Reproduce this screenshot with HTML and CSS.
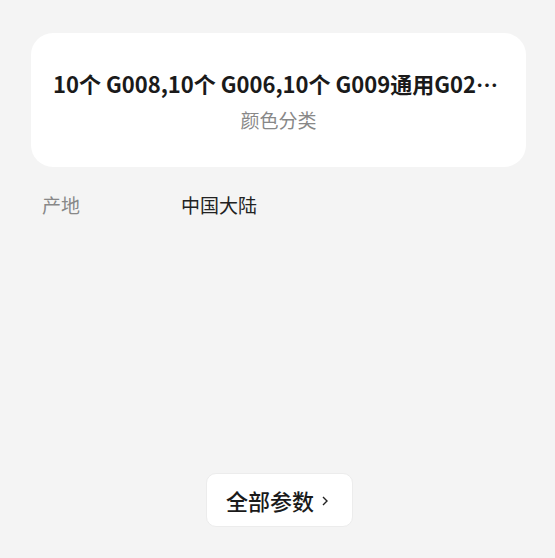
FILE: index.html
```html
<!DOCTYPE html>
<html lang="zh">
<head>
<meta charset="utf-8">
<link rel="stylesheet" href="styles.css">
</head>
<body>
<div class="page">
  <section class="sku-card">
    <div class="sku-title">10个 G008,10个 G006,10个 G009通用G02…</div>
    <div class="sku-label">颜色分类</div>
  </section>
  <div class="param-list">
    <div class="param-row">
      <span class="param-key">产地</span>
      <span class="param-val">中国大陆</span>
    </div>
  </div>
  <div class="more-wrap">
    <button class="more-btn">全部参数<svg class="chev" width="8" height="12" viewBox="0 0 8 12"><path d="M2 2l4 4-4 4" fill="none" stroke="#222" stroke-width="1.4"/></svg></button>
  </div>
</div>
</body>
</html>
```
FILE: styles.css
```css
* { box-sizing: border-box; }
html, body {
  margin: 0;
  background: #f4f4f4;
  font-family: "Noto Sans CJK SC", "Noto Sans", sans-serif;
}
.page {
  width: 555px;
  height: 558px;
  padding: 33px 29px 0 31px;
  display: flex;
  flex-direction: column;
}
.sku-card {
  background: #fff;
  border-radius: 22px;
  height: 134px;
  display: flex;
  flex-direction: column;
  align-items: center;
  justify-content: center;
  gap: 9px;
  padding: 0 16px 0 10px;
}
.sku-title {
  font-size: 22px;
  font-weight: 700;
  color: #1a1a1a;
  line-height: 30px;
  white-space: nowrap;
}
.sku-label {
  font-size: 19px;
  color: #888;
  line-height: 26px;
  margin-left: 6px;
}
.param-list {
  padding: 24px 0 0 11px;
}
.param-row {
  display: flex;
  font-size: 19px;
  line-height: 28px;
}
.param-key {
  width: 139px;
  color: #888;
}
.param-val {
  color: #222;
}
.more-wrap {
  margin-top: auto;
  margin-bottom: 31px;
  display: flex;
  justify-content: center;
}
.more-btn {
  background: #fff;
  border: 1px solid #ececec;
  border-radius: 10px;
  width: 147px;
  height: 54px;
  font-family: inherit;
  font-size: 22px;
  font-weight: 500;
  color: #1a1a1a;
  display: flex;
  align-items: center;
  justify-content: center;
  gap: 7px;
  padding: 0 4px 0 0;
  margin-left: 2px;
}
.chev { margin-top: 2px; }
```
